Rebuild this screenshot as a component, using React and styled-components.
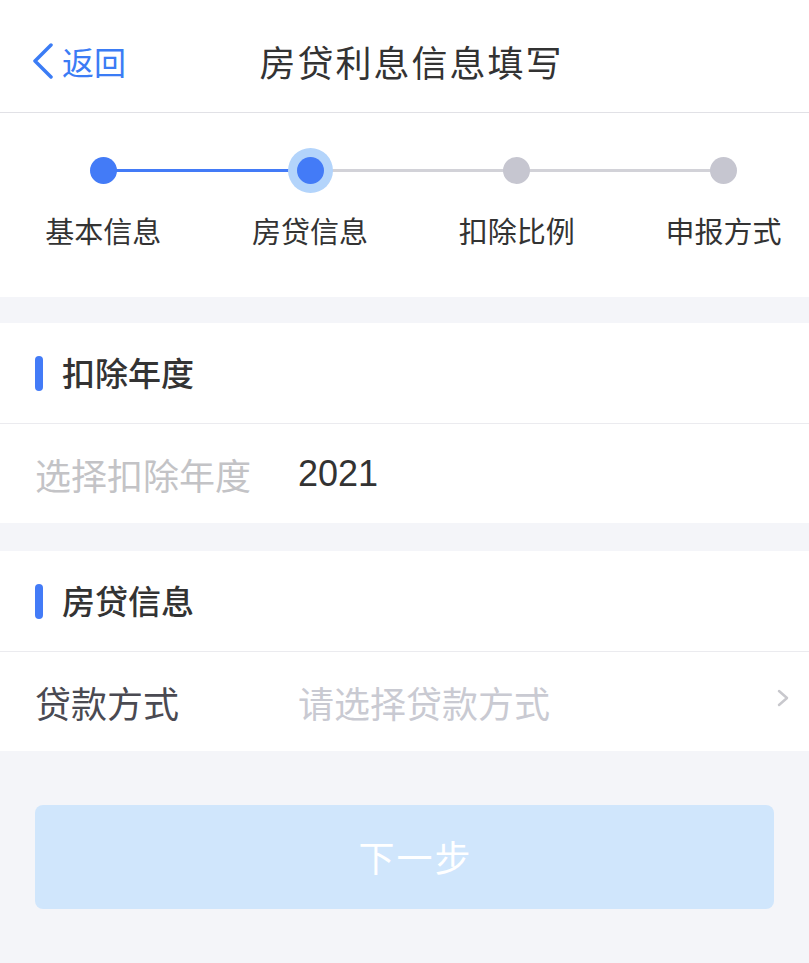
import React from 'react';
import styled, { createGlobalStyle } from 'styled-components';

const GlobalStyle = createGlobalStyle`
  html, body {
    margin: 0;
    padding: 0;
    background: #f4f5f9;
    font-family: "Noto Sans CJK SC", "Liberation Sans", sans-serif;
    color: #333333;
  }
`;

const Page = styled.div`
  width: 809px;
  min-height: 963px;
  background: #f4f5f9;
  overflow: hidden;
`;

const NavBar = styled.header`
  height: 113px;
  box-sizing: border-box;
  background: #ffffff;
  border-bottom: 1px solid #e1e1e6;
  display: grid;
  grid-template-columns: 1fr auto 1fr;
  align-items: center;
  padding: 9px 19px 0 33px;
`;

const BackButton = styled.button`
  display: flex;
  align-items: center;
  gap: 9px;
  padding: 0;
  border: none;
  background: none;
  color: #3b7cf5;
  font-family: inherit;
  font-size: 32px;
  line-height: 1;
  cursor: pointer;
  justify-self: start;
`;

const Title = styled.h1`
  margin: 0;
  font-size: 36px;
  font-weight: 400;
  letter-spacing: 2px;
  color: #333333;
`;

const StepsCard = styled.section`
  background: #ffffff;
  height: 184px;
  overflow: hidden;
`;

const StepsGrid = styled.ol`
  list-style: none;
  margin: 0;
  padding: 35px 0 0;
  width: 827px;
  display: grid;
  grid-template-columns: repeat(4, 1fr);
`;

const Step = styled.li`
  display: flex;
  flex-direction: column;
  align-items: center;
`;

const DotRow = styled.div`
  position: relative;
  width: 100%;
  height: 45px;
  display: flex;
  align-items: center;
  justify-content: center;

  &::before,
  &::after {
    content: '';
    position: absolute;
    top: 21px;
    height: 3px;
    width: 50%;
  }

  &::before {
    left: 0;
    background: ${(p) => (p.$first ? 'transparent' : p.$reached ? '#437bf7' : '#d2d2d8')};
  }

  &::after {
    right: 0;
    background: ${(p) => (p.$last ? 'transparent' : p.$lineDone ? '#437bf7' : '#d2d2d8')};
  }
`;

const Dot = styled.span`
  position: relative;
  z-index: 1;
  width: 27px;
  height: 27px;
  border-radius: 50%;
  background: ${(p) => (p.$reached ? '#437bf7' : '#c6c6d0')};
  box-shadow: ${(p) => (p.$current ? '0 0 0 9px #b3d4fb' : 'none')};
`;

const StepLabel = styled.span`
  margin-top: 20px;
  font-size: 29px;
  line-height: 35px;
  color: #333333;
`;

const Card = styled.section`
  background: #ffffff;
  margin-top: ${(p) => p.$gap}px;
`;

const CardHead = styled.div`
  height: 100px;
  display: flex;
  align-items: center;
  gap: 19px;
  padding-left: 35px;
  border-bottom: 1px solid #ebebef;
`;

const Marker = styled.span`
  width: 8px;
  height: 35px;
  border-radius: 4px;
  background: #437bf7;
`;

const CardTitle = styled.h2`
  margin: 0 0 2px;
  font-size: 33px;
  font-weight: 500;
  color: #333333;
`;

const Row = styled.div`
  height: 99px;
  display: flex;
  align-items: center;
  padding: 0 19px 0 35px;
`;

const RowLabel = styled.span`
  width: 263px;
  flex-shrink: 0;
  font-size: 36px;
  color: ${(p) => (p.$muted ? '#c3c3c6' : '#4a4a52')};
`;

const RowValue = styled.span`
  flex: 1;
  font-size: 36px;
  font-family: ${(p) => (p.$number ? '"Liberation Sans", "Noto Sans CJK SC", sans-serif' : 'inherit')};
  color: ${(p) => (p.$placeholder ? '#c9cad2' : '#333333')};
`;

const Chevron = styled.svg`
  width: 14px;
  height: 20px;
  margin-top: -8px;
`;

const Footer = styled.div`
  padding: 54px 35px 0;
`;

const NextButton = styled.button`
  width: 739px;
  height: 104px;
  border: none;
  border-radius: 8px;
  background: #d0e6fc;
  color: #ffffff;
  font-family: inherit;
  font-size: 36px;
  letter-spacing: 2px;
  padding: 0 0 2px 22px;
  cursor: default;
`;

const steps = ['基本信息', '房贷信息', '扣除比例', '申报方式'];
const current = 1;

export default function App() {
  return (
    <Page>
      <GlobalStyle />
      <NavBar>
        <BackButton>
          <svg width="20" height="36" viewBox="0 0 20 36">
            <polyline
              points="18,2 2,18 18,34"
              fill="none"
              stroke="#3b7cf5"
              strokeWidth="3.5"
              strokeLinecap="round"
              strokeLinejoin="round"
            />
          </svg>
          返回
        </BackButton>
        <Title>房贷利息信息填写</Title>
        <span />
      </NavBar>

      <StepsCard>
        <StepsGrid>
          {steps.map((s, i) => (
            <Step key={s}>
              <DotRow
                $first={i === 0}
                $last={i === steps.length - 1}
                $reached={i <= current}
                $lineDone={i < current}
              >
                <Dot $reached={i <= current} $current={i === current} />
              </DotRow>
              <StepLabel>{s}</StepLabel>
            </Step>
          ))}
        </StepsGrid>
      </StepsCard>

      <Card $gap={26}>
        <CardHead>
          <Marker />
          <CardTitle>扣除年度</CardTitle>
        </CardHead>
        <Row>
          <RowLabel $muted>选择扣除年度</RowLabel>
          <RowValue $number>2021</RowValue>
        </Row>
      </Card>

      <Card $gap={28}>
        <CardHead>
          <Marker />
          <CardTitle>房贷信息</CardTitle>
        </CardHead>
        <Row>
          <RowLabel>贷款方式</RowLabel>
          <RowValue $placeholder>请选择贷款方式</RowValue>
          <Chevron viewBox="0 0 14 20">
            <polyline
              points="3,3 11,10 3,17"
              fill="none"
              stroke="#c8c8cd"
              strokeWidth="2.5"
              strokeLinecap="round"
              strokeLinejoin="round"
            />
          </Chevron>
        </Row>
      </Card>

      <Footer>
        <NextButton>下一步</NextButton>
      </Footer>
    </Page>
  );
}
